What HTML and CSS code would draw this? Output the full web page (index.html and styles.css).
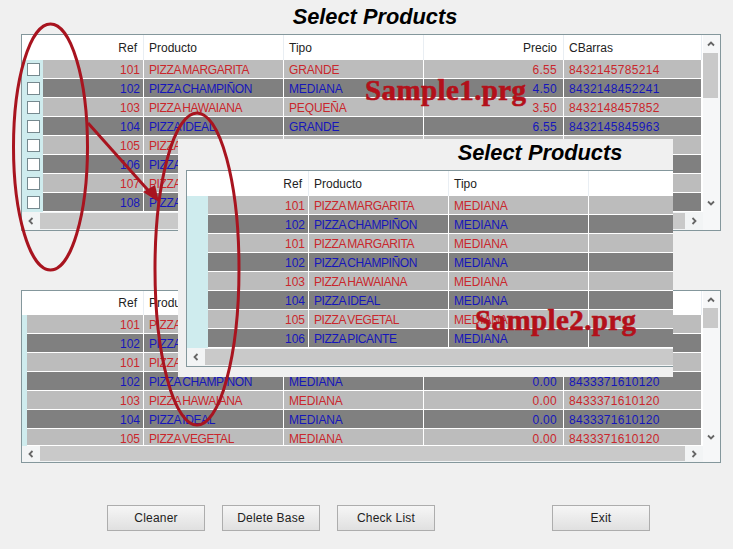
FILE: index.html
```html
<!DOCTYPE html>
<html lang="es">
<head>
<meta charset="utf-8">
<title>Select Products</title>
<link rel="stylesheet" href="styles.css">
</head>
<body>
<div class="app">
  <h1 class="title">Select Products</h1>

  <section class="grid grid-checks">
    <div class="grid-main">
      <div class="head"><span class="ind"></span><span class="num-h">Ref</span><span>Producto</span><span>Tipo</span><span class="price-h">Precio</span><span>CBarras</span></div>
      <div class="row r"><span class="ind"><i class="check"></i></span><span class="num">101</span><span>PIZZA MARGARITA</span><span>GRANDE</span><span class="price">6.55</span><span>8432145785214</span></div>
      <div class="row b"><span class="ind"><i class="check"></i></span><span class="num">102</span><span>PIZZA CHAMPIÑON</span><span>MEDIANA</span><span class="price">4.50</span><span>8432148452241</span></div>
      <div class="row r"><span class="ind"><i class="check"></i></span><span class="num">103</span><span>PIZZA HAWAIANA</span><span>PEQUEÑA</span><span class="price">3.50</span><span>8432148457852</span></div>
      <div class="row b"><span class="ind"><i class="check"></i></span><span class="num">104</span><span>PIZZA IDEAL</span><span>GRANDE</span><span class="price">6.55</span><span>8432145845963</span></div>
      <div class="row r"><span class="ind"><i class="check"></i></span><span class="num">105</span><span>PIZZA</span><span></span><span></span><span></span></div>
      <div class="row b"><span class="ind"><i class="check"></i></span><span class="num">106</span><span>PIZZA</span><span></span><span></span><span></span></div>
      <div class="row r"><span class="ind"><i class="check"></i></span><span class="num">107</span><span>PIZZA</span><span></span><span></span><span></span></div>
      <div class="row b"><span class="ind"><i class="check"></i></span><span class="num">108</span><span>PIZZA</span><span></span><span></span><span></span></div>
      <div class="hscroll">
        <span class="sb-btn"><svg class="chev" viewBox="0 0 8 8"><path d="M5.5 1 2.5 4 5.5 7"/></svg></span>
        <span class="sb-thumb"></span>
        <span class="sb-btn"><svg class="chev" viewBox="0 0 8 8"><path d="M2.5 1 5.500 4 2.500 7"/></svg></span>
      </div>
    </div>
    <div class="vscroll">
      <span class="sb-btn"><svg class="chev" viewBox="0 0 8 8"><path d="M1 5.500 4 2.500 7 5.500"/></svg></span>
      <span class="v-thumb"></span>
      <span class="v-space"></span>
      <span class="sb-btn"><svg class="chev" viewBox="0 0 8 8"><path d="M1 2.500 4 5.500 7 2.500"/></svg></span>
      <span class="v-corner"></span>
    </div>
  </section>

  <section class="grid grid-scrolled">
    <div class="grid-main">
      <div class="head"><span class="ind"></span><span class="num-h">Ref</span><span>Producto</span><span>Tipo</span><span class="price-h">Precio</span><span>CBarras</span></div>
      <div class="row r"><span class="ind"></span><span class="num">101</span><span>PIZZA MARGARITA</span><span>MEDIANA</span><span class="price">0.00</span><span>8433371610120</span></div>
      <div class="row b"><span class="ind"></span><span class="num">102</span><span>PIZZA CHAMPIÑON</span><span>MEDIANA</span><span class="price">0.00</span><span>8433371610120</span></div>
      <div class="row r"><span class="ind"></span><span class="num">101</span><span>PIZZA MARGARITA</span><span>MEDIANA</span><span class="price">0.00</span><span>8433371610120</span></div>
      <div class="row b"><span class="ind"></span><span class="num">102</span><span>PIZZA CHAMPIÑON</span><span>MEDIANA</span><span class="price">0.00</span><span>8433371610120</span></div>
      <div class="row r"><span class="ind"></span><span class="num">103</span><span>PIZZA HAWAIANA</span><span>MEDIANA</span><span class="price">0.00</span><span>8433371610120</span></div>
      <div class="row b"><span class="ind"></span><span class="num">104</span><span>PIZZA IDEAL</span><span>MEDIANA</span><span class="price">0.00</span><span>8433371610120</span></div>
      <div class="row r row-cut"><span class="ind"></span><span class="num">105</span><span>PIZZA VEGETAL</span><span>MEDIANA</span><span class="price">0.00</span><span>8433371610120</span></div>
      <div class="hscroll">
        <span class="sb-btn"><svg class="chev" viewBox="0 0 8 8"><path d="M5.5 1 2.5 4 5.5 7"/></svg></span>
        <span class="sb-thumb"></span>
        <span class="sb-btn"><svg class="chev" viewBox="0 0 8 8"><path d="M2.5 1 5.500 4 2.500 7"/></svg></span>
      </div>
    </div>
    <div class="vscroll">
      <span class="sb-btn"><svg class="chev" viewBox="0 0 8 8"><path d="M1 5.500 4 2.500 7 5.500"/></svg></span>
      <span class="v-thumb"></span>
      <span class="v-space"></span>
      <span class="sb-btn"><svg class="chev" viewBox="0 0 8 8"><path d="M1 2.500 4 5.500 7 2.500"/></svg></span>
      <span class="v-corner"></span>
    </div>
  </section>

  <div class="actions">
    <button class="btn">Cleaner</button>
    <button class="btn">Delete Base</button>
    <button class="btn">Check List</button>
    <button class="btn btn-exit">Exit</button>
  </div>

  <div class="window">
    <h2 class="title">Select Products</h2>
    <section class="grid grid-plain">
      <div class="grid-main">
        <div class="head"><span class="ind"></span><span class="num-h">Ref</span><span>Producto</span><span>Tipo</span><span></span><span></span></div>
        <div class="row r"><span class="ind"></span><span class="num">101</span><span>PIZZA MARGARITA</span><span>MEDIANA</span><span></span><span></span></div>
        <div class="row b"><span class="ind"></span><span class="num">102</span><span>PIZZA CHAMPIÑON</span><span>MEDIANA</span><span></span><span></span></div>
        <div class="row r"><span class="ind"></span><span class="num">101</span><span>PIZZA MARGARITA</span><span>MEDIANA</span><span></span><span></span></div>
        <div class="row b"><span class="ind"></span><span class="num">102</span><span>PIZZA CHAMPIÑON</span><span>MEDIANA</span><span></span><span></span></div>
        <div class="row r"><span class="ind"></span><span class="num">103</span><span>PIZZA HAWAIANA</span><span>MEDIANA</span><span></span><span></span></div>
        <div class="row b"><span class="ind"></span><span class="num">104</span><span>PIZZA IDEAL</span><span>MEDIANA</span><span></span><span></span></div>
        <div class="row r"><span class="ind"></span><span class="num">105</span><span>PIZZA VEGETAL</span><span>MEDIANA</span><span></span><span></span></div>
        <div class="row b"><span class="ind"></span><span class="num">106</span><span>PIZZA PICANTE</span><span>MEDIANA</span><span></span><span></span></div>
        <div class="hscroll">
          <span class="sb-btn"><svg class="chev" viewBox="0 0 8 8"><path d="M5.5 1 2.5 4 5.5 7"/></svg></span>
          <span class="sb-thumb"></span>
        </div>
      </div>
    </section>
  </div>

  <svg class="marks" viewBox="0 0 733 549">
    <ellipse class="mark-line" cx="50.500" cy="147" rx="37" ry="123"/>
    <path class="mark-line" d="M88 123 155 198"/>
    <path class="mark-fill" d="M143 192 159 202 155 185Z"/>
    <ellipse class="mark-line" cx="197" cy="269" rx="42" ry="156"/>
  </svg>
  <span class="label label-one">Sample1.prg</span>
  <span class="label label-two">Sample2.prg</span>
</div>
</body>
</html>
```
FILE: styles.css
```css
* { box-sizing: border-box; }
html, body { margin: 0; padding: 0; }
body { font-family: "Liberation Sans", Arial, sans-serif; font-size: 12px; color: #222; background: #f0f0f0; }

.app { position: relative; width: 733px; height: 549px; overflow: hidden; background: #f0f0f0; padding-left: 21px; }

.title { margin: 0; padding-left: 8px; width: 700px; height: 34px; line-height: 34px; font-size: 21.8px; font-weight: bold; font-style: italic; text-align: center; color: #000; }

.grid { display: flex; width: 700px; border: 1px solid #84979c; background: #fff; --ind: 21px; --ref: 101px; }
.grid-scrolled { margin-top: 59px; --ind: 5px; --ref: 117px; }
.grid-main { width: 681px; }

.head, .row { display: grid; grid-template-columns: var(--ind) var(--ref) 140px 140px 140px 138px; align-items: start; white-space: nowrap; }
.head { height: 25px; line-height: 26px; color: #222; }
.grid-scrolled .head { height: 24px; line-height: 25px; }
.head span { height: 100%; padding-left: 5px; border-right: 1px solid #e9eef3; }
.head .ind { padding: 0; border: 0; }
.head .num-h { text-align: right; padding: 0 6px 0 0; }
.head .price-h { text-align: right; padding: 0 6px 0 0; }

.row { height: 19px; background: #fff; }
.row span { height: 18px; line-height: 20px; padding-left: 5px; border-right: 1px solid #fff; overflow: hidden; }
.row.r span { background: #bcbcbc; color: #c9272c; }
.row.b span { background: #808080; color: #1616bb; }
.row .num { text-align: right; padding: 0 3px 0 0; }
.row .price { text-align: right; padding: 0 6px 0 0; letter-spacing: 0.3px; }
.row span:nth-child(3) { letter-spacing: -0.4px; word-spacing: -1px; }
.row span:nth-child(4) { letter-spacing: -0.15px; }
.row span:nth-child(6) { letter-spacing: 0.3px; }
.row span.ind { height: 19px; padding: 0; border: 0; background: #cfecee; }
.row-cut { height: 17px; }
.row-cut span { height: 16px; }
.row-cut span.ind { height: 17px; }

.check { display: block; width: 13px; height: 13px; margin: 3px 0 0 5px; background: #fff; border: 1px solid #76898f; }

.hscroll { display: flex; height: 18px; padding: 1px 0 1px 0; background: #f2f4f5; }
.grid-scrolled .hscroll { height: 16px; padding-top: 0; }
.sb-btn { display: flex; flex: none; width: 18px; height: 18px; align-items: center; justify-content: center; }
.hscroll .sb-btn { height: 100%; }
.sb-thumb { flex: 1; background: #c9c9c9; }
.chev { width: 8px; height: 8px; }
.chev path { fill: none; stroke: #666; stroke-width: 1.800; }

.vscroll { display: flex; flex-direction: column; flex: 1; background: #f6f7f8; }
.vscroll .sb-btn { width: 15px; }
.v-thumb { width: 15px; height: 45px; background: #c9c9c9; }
.grid-scrolled .v-thumb { height: 20px; }
.grid-scrolled .vscroll .sb-btn:first-child { height: 17px; }
.v-space { flex: 1; }
.v-corner { height: 18px; }
.grid-scrolled .v-corner { height: 16px; }

.actions { display: flex; gap: 17px; margin: 42px 0 0 86px; }
.btn { width: 98px; height: 26px; padding: 0; border: 1px solid #adadad; background: linear-gradient(#f6f6f6, #e0e0e0); font: 12px "Liberation Sans", Arial, sans-serif; letter-spacing: 0.2px; color: #222; }
.btn-exit { margin-left: 100px; }

.window { position: absolute; left: 178px; top: 139px; width: 495px; height: 238px; overflow: hidden; background: #f0f0f0; padding-left: 8px; }
.window .title { height: 31px; line-height: 27px; }
.grid-plain .hscroll { padding-right: 0; }

.marks { position: absolute; left: 0; top: 0; width: 733px; height: 549px; pointer-events: none; }
.mark-line { fill: none; stroke: #a8141f; stroke-width: 3; }
.mark-fill { fill: #a8141f; }

.label { position: absolute; font-family: "Liberation Serif", "Times New Roman", serif; font-weight: bold; font-size: 29px; line-height: 32px; letter-spacing: 0.4px; -webkit-text-stroke: 0.6px #b3101a; color: #b3101a; white-space: nowrap; }
.label-one { left: 365px; top: 74px; }
.label-two { left: 475px; top: 304px; }
```
